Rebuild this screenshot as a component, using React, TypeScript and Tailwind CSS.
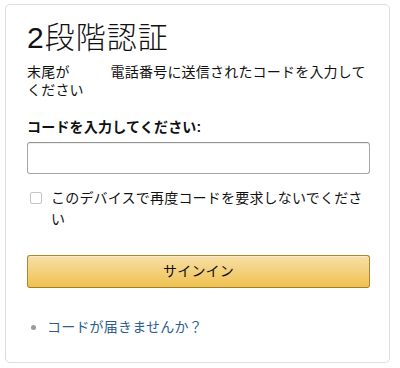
import React from "react";

export default function App() {
  return (
    <div
      className="w-[400px] h-[368px] bg-white pt-[4px] pl-[5px]"
      style={{ fontFamily: '"Liberation Sans", "Noto Sans CJK JP", sans-serif' }}
    >
      <div className="w-[385px] h-[359px] border border-[#dddddd] rounded-[5px] pt-[15px] pl-[21px] pr-[19px] text-[#111111]">
        <h1 className="text-[30px] leading-[36px] font-light tracking-[1px]">2段階認証</h1>
        <div className="mt-[7px] text-[14px] leading-[18px] tracking-[0.2px]">
          <div className="flex whitespace-nowrap">
            <span>末尾が</span>
            <span className="ml-[41px]">電話番号に送信されたコードを入力して</span>
          </div>
          <div>ください</div>
        </div>
        <div className="mt-[19px] text-[14px] leading-[18px] font-bold tracking-[0.2px]">コードを入力してください:</div>
        <div className="mt-[6px] h-[32px] border border-[#a6a6a6] border-t-[#949494] rounded-[3px] shadow-[inset_0_1px_0_rgba(0,0,0,0.07)]"></div>
        <div className="mt-[14px] flex items-start">
          <div className="mt-[4px] ml-[3px] w-[12px] h-[12px] shrink-0 border border-[#c4c4c4] rounded-[2px] bg-white"></div>
          <div className="ml-[9px] text-[14px] leading-[21px] tracking-[0.2px]">
            このデバイスで再度コードを要求しないでください
          </div>
        </div>
        <button className="mt-[25px] w-full h-[33px] rounded-[3px] border border-[#a88734] border-b-[#9c7e31] bg-gradient-to-b from-[#f7dfa5] to-[#f0c14b] text-[14px] tracking-[0.2px] text-[#111111] shadow-[inset_0_1px_0_rgba(255,255,255,0.4)]">
          サインイン
        </button>
        <div className="mt-[29px] flex items-center text-[14px] leading-[20px] tracking-[0.2px]">
          <span className="ml-[4px] w-[5px] h-[5px] rounded-full bg-[#9a9a9a]"></span>
          <span className="ml-[11px] text-[#2d5f8e]">コードが届きませんか？</span>
        </div>
      </div>
    </div>
  );
}
